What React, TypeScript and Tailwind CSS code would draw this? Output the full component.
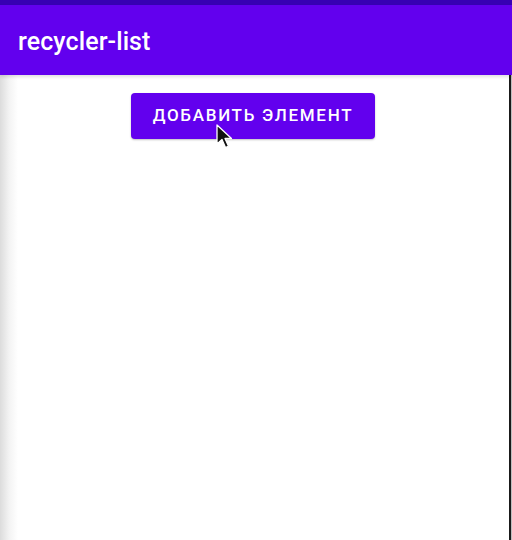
import React from "react";

export default function App() {
  return (
    <div className="relative w-[512px] h-[540px] bg-white overflow-hidden flex" style={{ fontFamily: "Roboto, 'Noto Sans', sans-serif" }}>
      <div className="w-[18px] h-full bg-gradient-to-r from-[#dcdcdc] via-[#f3f3f3] to-white" />
      <div className="flex-1 flex flex-col" />
      <div className="w-[2px] h-full bg-[#1a1a1a]" />
      <div className="w-[1px] h-full bg-[#bdbdbd]" />
      <div className="absolute inset-0 flex flex-col">
        <div className="h-[5px] bg-[#3700b3] shrink-0" />
        <div className="h-[70px] bg-[#6200ee] shrink-0 flex items-center pl-[18px] pr-[2px] pt-[4px] shadow-[0_2px_3px_rgba(0,0,0,0.12)]">
          <span className="text-white text-[25px] font-medium tracking-[0.1px]">recycler-list</span>
        </div>
        <div className="flex justify-center pt-[18px] pr-[2px]">
          <button className="ml-[-4px] h-[46px] w-[244px] rounded-[4px] bg-[#6200ee] text-white text-[17px] font-medium tracking-[1.7px] uppercase shadow-[0_1px_2px_rgba(0,0,0,0.25)]">
            Добавить элемент
          </button>
        </div>
      </div>
      <svg className="absolute left-[216px] top-[124px]" width="20" height="28" viewBox="0 0 20 28">
        <path d="M1 1 L1 20 L6 15.5 L9.5 23.5 L12.5 22.2 L9 14.5 L15.5 14.5 Z" fill="#111" stroke="#fff" strokeWidth="1.3" strokeLinejoin="round" />
      </svg>
    </div>
  );
}
